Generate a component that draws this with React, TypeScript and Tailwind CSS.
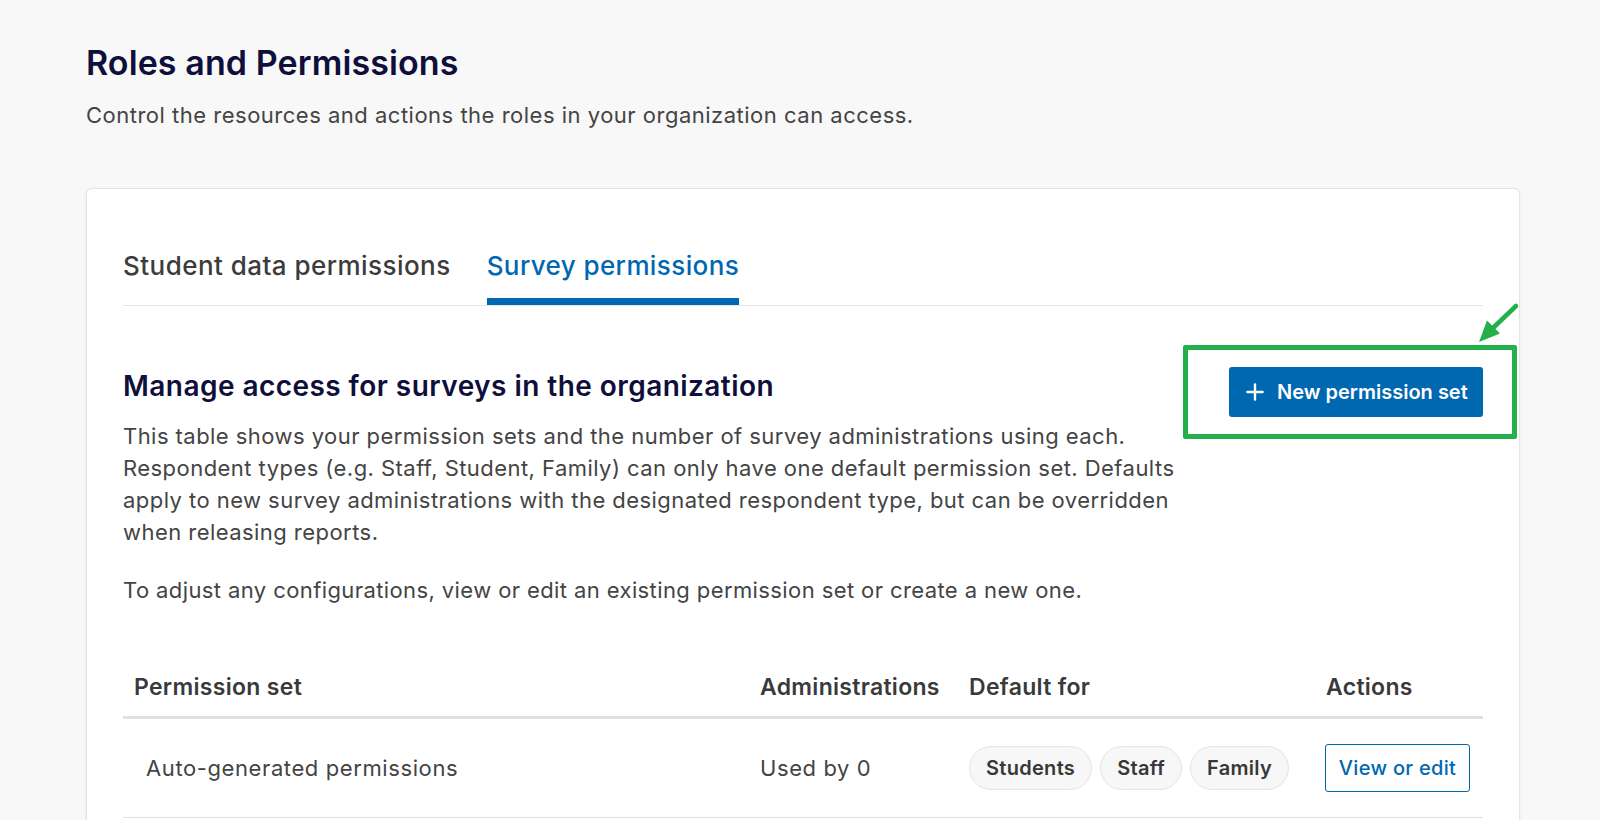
import { Plus } from "lucide-react";

const font = { fontFamily: "Inter, 'Noto Sans', sans-serif" };

function Chip({ label }: { label: string }) {
  return (
    <span className="inline-flex h-[44px] items-center rounded-full border border-[#e3e3e3] bg-[#f7f7f7] px-[16px] text-[20px] font-semibold tracking-[0.3px] text-[#383838]">
      {label}
    </span>
  );
}

const cols = "grid grid-cols-[625px_209px_357px_1fr]";

export default function App() {
  return (
    <div
      className="min-h-[820px] overflow-hidden bg-[#f8f8f8] pl-[86px] pt-[41px] text-[#444]"
      style={font}
    >
      <h1 className="text-[34px] font-semibold leading-[44px] tracking-[0.1px] text-[#0f0f3b]">
        Roles and Permissions
      </h1>
      <p className="mt-[15px] text-[22px] leading-[30px] tracking-[0.5px] text-[#444]">
        Control the resources and actions the roles in your organization can access.
      </p>

      <div className="mt-[58px] w-[1434px] rounded-[6px] border border-[#e4e4e4] bg-white px-[36px] pb-10 pt-[59px] shadow-[0_1px_4px_rgba(0,0,0,0.06)]">
        {/* tabs */}
        <div className="flex gap-[36px] border-b border-[#e6e6e6]">
          <button className="pb-[21px] text-[26px] font-medium leading-[36px] tracking-[0.45px] text-[#3c3c3c]">
            Student data permissions
          </button>
          <button className="border-b-[7px] border-[#0067b1] pb-[14px] text-[26px] font-medium leading-[36px] tracking-[0.4px] text-[#0067b1]">
            Survey permissions
          </button>
        </div>

        {/* section header + action */}
        <div className="mt-[61px] flex items-start justify-between">
          <div>
            <h2 className="text-[28px] font-semibold leading-[38px] tracking-[0.45px] text-[#0f0f3b]">
              Manage access for surveys in the organization
            </h2>
            <p className="mt-[15px] text-[22px] leading-[32px] tracking-[0.45px] text-[#444]">
              This table shows your permission sets and the number of survey administrations using each.
              <br />
              Respondent types (e.g. Staff, Student, Family) can only have one default permission set. Defaults
              <br />
              apply to new survey administrations with the designated respondent type, but can be overridden
              <br />
              when releasing reports.
            </p>
            <p className="mt-[26px] text-[22px] leading-[32px] tracking-[0.4px] text-[#444]">
              To adjust any configurations, view or edit an existing permission set or create a new one.
            </p>
          </div>

          <div className="relative">
            <button className="flex h-[50px] w-[254px] items-center gap-[9px] whitespace-nowrap rounded-[3px] bg-[#0067b1] pl-[13px] text-[20px] font-semibold text-white">
              <Plus size={26} strokeWidth={2.2} className="shrink-0" />
              New permission set
            </button>
            {/* annotation */}
            <div className="pointer-events-none absolute bottom-[-22px] left-[-46px] right-[-34px] top-[-22px] rounded-[2px] border-[5px] border-[#22b04b]" />
            <svg
              className="pointer-events-none absolute left-[240px] top-[-66px]"
              width="52"
              height="50"
              viewBox="0 0 52 50"
            >
              <line x1="47" y1="5" x2="24" y2="27" stroke="#22b04b" strokeWidth="4.5" strokeLinecap="round" />
              <polygon points="10,41 18,19.5 31,32.5" fill="#22b04b" strokeLinejoin="round" />
            </svg>
          </div>
        </div>

        {/* table */}
        <div className="mt-[65px]">
          <div className={`${cols} border-b-[3px] border-[#e0e0e0] pb-[13px] text-[23px] font-semibold leading-[32px] tracking-[0.3px] text-[#3a3a3a]`}>
            <div className="pl-[11px]">Permission set</div>
            <div className="pl-[12px]">Administrations</div>
            <div className="pl-[12px]">Default for</div>
            <div className="pl-[12px]">Actions</div>
          </div>
          <div className={`${cols} h-[99px] items-center border-b border-[#e0e0e0] text-[22px] tracking-[0.6px] text-[#444]`}>
            <div className="pl-[23px]">Auto-generated permissions</div>
            <div className="pl-[12px]">Used by 0</div>
            <div className="flex gap-[8px] pl-[12px] tracking-normal">
              <Chip label="Students" />
              <Chip label="Staff" />
              <Chip label="Family" />
            </div>
            <div className="pl-[11px]">
              <button className="h-[48px] w-[145px] rounded-[3px] border border-[#0067b1] text-[20px] font-medium tracking-[0.3px] text-[#0067b1]">
                View or edit
              </button>
            </div>
          </div>
        </div>
      </div>
    </div>
  );
}
